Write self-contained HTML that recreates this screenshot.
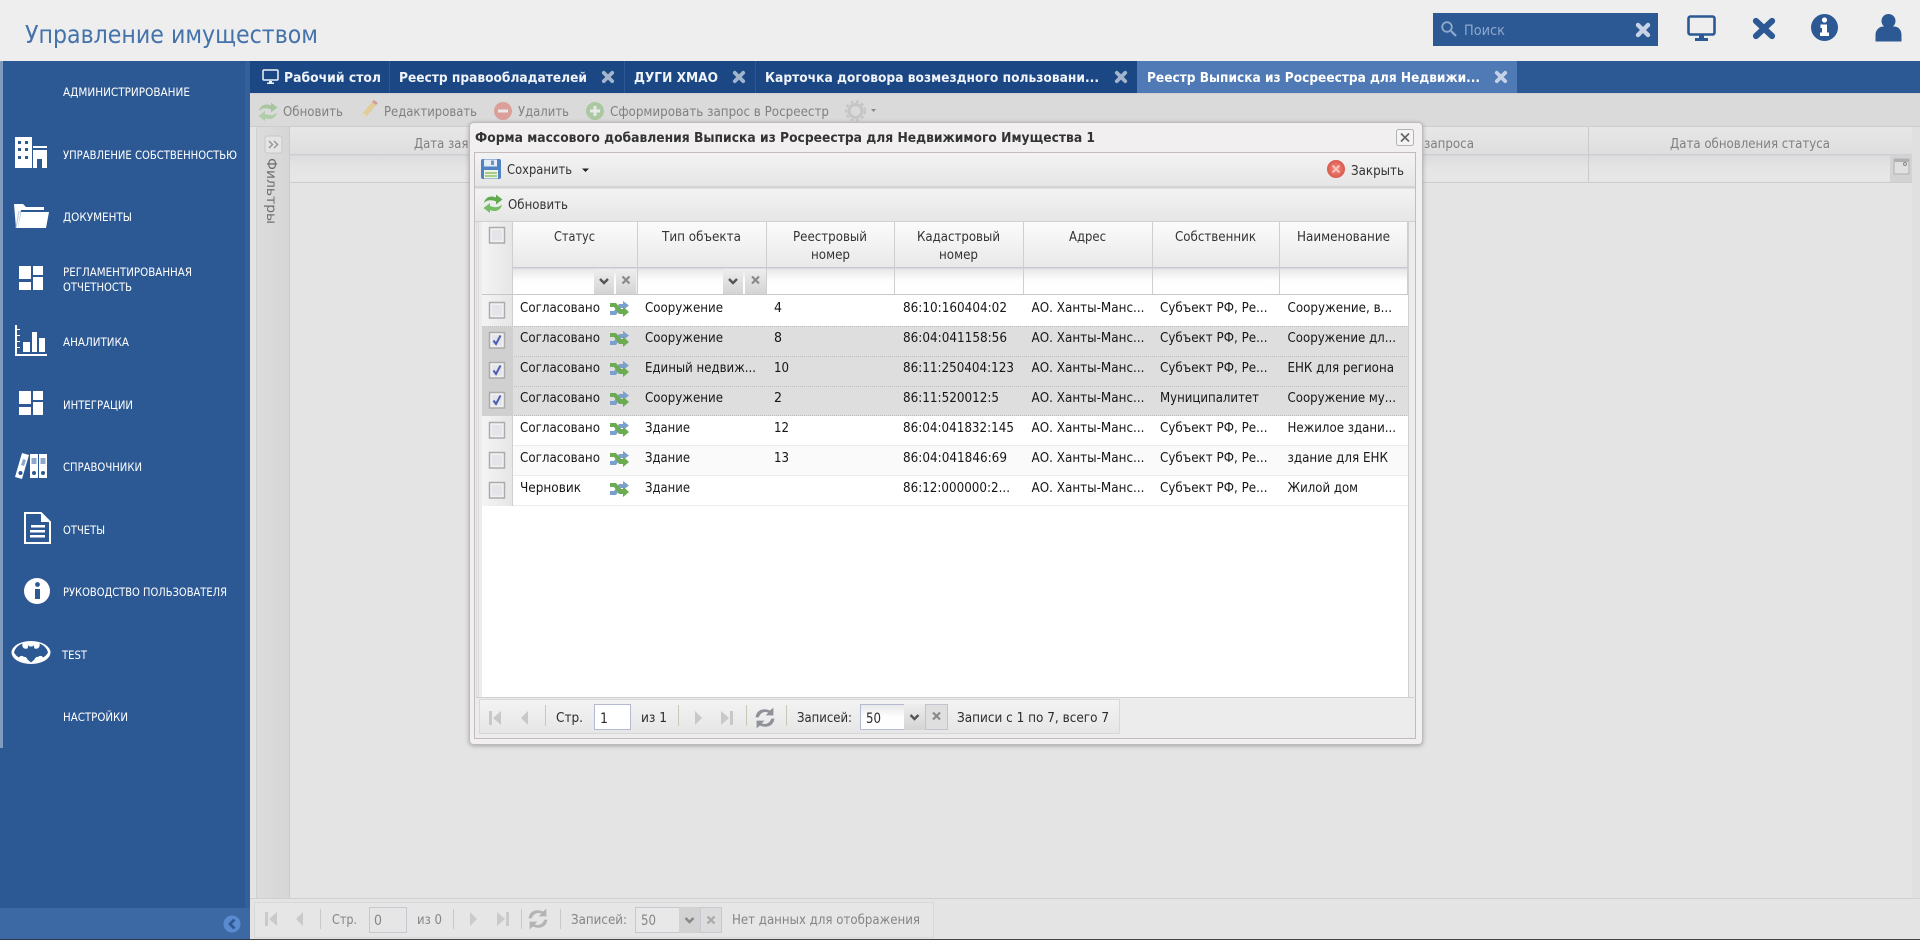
<!DOCTYPE html>
<html lang="ru"><head><meta charset="utf-8"><title>Управление имуществом</title>
<style>
html,body{margin:0;padding:0;width:1920px;height:940px;overflow:hidden;background:#e4e4e4}
svg{display:block}
text{font-family:"DejaVu Sans","Liberation Sans",sans-serif;font-size:13px;fill:#222}
.s text{font-size:11.500px;fill:#fff}
.tb text{font-size:13.500px;font-weight:bold;fill:#f0f4fa}
.d text{font-size:13.500px;fill:#808080}
.h text{font-size:13px;fill:#333}
.r text{font-size:13px;fill:#161616}
.p text{font-size:13px;fill:#2c2c2c}
.dp text{font-size:13px;fill:#858585}
</style></head><body>
<svg xmlns="http://www.w3.org/2000/svg" width="1920" height="940" viewBox="0 0 1920 940">
<defs>
<linearGradient id="gh" x1="0" y1="0" x2="0" y2="1"><stop offset="0" stop-color="#fbfbfb"/><stop offset="1" stop-color="#e9e9e9"/></linearGradient>
<linearGradient id="gf" x1="0" y1="0" x2="0" y2="1"><stop offset="0" stop-color="#e6e6e6"/><stop offset=".45" stop-color="#fdfdfd"/><stop offset="1" stop-color="#fff"/></linearGradient>
<linearGradient id="gt" x1="0" y1="0" x2="0" y2="1"><stop offset="0" stop-color="#f3f3f3"/><stop offset="1" stop-color="#e6e6e6"/></linearGradient>
<linearGradient id="gb" x1="0" y1="0" x2="0" y2="1"><stop offset="0" stop-color="#eeeeee"/><stop offset="1" stop-color="#d4d4d4"/></linearGradient>
<linearGradient id="gk" x1="0" y1="0" x2="1" y2="0"><stop offset="0" stop-color="#f4f4f4"/><stop offset="1" stop-color="#e6e6e6"/></linearGradient>
<linearGradient id="gd" x1="0" y1="0" x2="0" y2="1"><stop offset="0" stop-color="#e7e7e7"/><stop offset="1" stop-color="#dedede"/></linearGradient>
<linearGradient id="gdf" x1="0" y1="0" x2="0" y2="1"><stop offset="0" stop-color="#dcdcdc"/><stop offset=".5" stop-color="#e5e5e5"/><stop offset="1" stop-color="#e6e6e6"/></linearGradient>
<linearGradient id="gfl" x1="0" y1="0" x2="1" y2="0"><stop offset="0" stop-color="#dcdcdc"/><stop offset="1" stop-color="#d6d6d6"/></linearGradient>
<radialGradient id="gred"><stop offset="0" stop-color="#f08a80"/><stop offset="1" stop-color="#dc5a4e"/></radialGradient>

<g id="xi"><path d="M-5-5L5 5M5-5L-5 5" fill="none" stroke-width="4.400" stroke-linecap="round"/></g>
<g id="xt"><path d="M-4.200-4.200L4.200 4.200M4.200-4.200L-4.200 4.200" fill="none" stroke-width="3.800" stroke-linecap="round"/></g>
<g id="grid"><path d="M0 0h12v13H0zM14 0h10v9H14zM0 16h12v8H0zM14 11h10v13H14z" fill="#fff"/></g>
<g id="ref">
<path d="M1 9C2 3 8 1 13 3.500V0.500L19.500 5.500 13 10.500V7.500C8 5.500 4 6 1 9Z" fill="#62ab50"/>
<path d="M19 10.500C18 16.500 12 18.500 7 16V19L.5 14 7 9V12C12 14 16 13.500 19 10.500Z" fill="#76bc62"/>
</g>
<g id="shuf">
<path d="M0 10h4L9 3h4V0l6 4.500L13 9V7h-2L6 14H0z" fill="#7ba0cc"/>
<path d="M0 2h6l5 6h2V5.500L19 11l-6 5v-3H9L4 6H0z" fill="#6cab52"/>
</g>
<g id="cb"><rect x=".5" y=".5" width="15" height="15.500" fill="#f1f1f1" stroke="#ababab" stroke-width="1.500"/><rect x="3" y="3" width="10" height="10.500" fill="#e4e4ea"/></g>
<g id="cbc"><use href="#cb"/><path d="M4.500 8.500l2.500 3.500 4.500-8.500" fill="none" stroke="#4a5fae" stroke-width="2"/></g>
<g id="first"><rect x="0" y="-7" width="3" height="14" fill="currentColor"/><path d="M12-7V7L4 0z" fill="currentColor"/></g>
<g id="prev"><path d="M6-7V7L-1 0z" fill="currentColor"/></g>
<g id="next"><path d="M0-7V7L7 0z" fill="currentColor"/></g>
<g id="last"><rect x="9" y="-7" width="3" height="14" fill="currentColor"/><path d="M0-7V7L8 0z" fill="currentColor"/></g>
<g id="prf"><path d="M-9-1C-8-8-1-10 5-7L8-9.500V-3H1.500L4-5.500C0-7.500-5-6-6.500-1zM9 1C8 8 1 10-5 7L-8 9.500V3H-1.500L-4 5.500C0 7.500 5 6 6.500 1z" fill="currentColor" stroke="currentColor" stroke-width=".8"/></g>
<g id="dn"><path d="M-4-2L0 2 4-2" fill="none" stroke="#555" stroke-width="2.400"/></g>
<g id="xs"><path d="M-3.500-3.500L3.500 3.500M3.500-3.500L-3.500 3.500" fill="none" stroke="#8a8a8a" stroke-width="2.200"/></g>
</defs>

<!-- page bg -->
<rect width="1920" height="940" fill="#e4e4e4"/>

<!-- top header -->
<rect width="1920" height="61" fill="#eeeeee"/>
<text x="25" y="43" textLength="293" lengthAdjust="spacingAndGlyphs" style="font-size:25px;fill:#4472ab">Управление имуществом</text>
<rect x="1433" y="13" width="225" height="33" fill="#2c5994"/>
<circle cx="1447" cy="27" r="4.800" fill="none" stroke="#8ea8cc" stroke-width="1.800"/><path d="M1451 31l5 5" stroke="#8ea8cc" stroke-width="2.200"/>
<text x="1464" y="35" textLength="41" lengthAdjust="spacingAndGlyphs" style="font-size:14.500px;fill:#8ea8cc">Поиск</text>
<use href="#xi" x="1643" y="30" stroke="#c8d4e6"/>
<!-- monitor -->
<rect x="1688.500" y="16.500" width="26" height="18" rx="2" fill="none" stroke="#2c5994" stroke-width="2.600"/>
<path d="M1699 35h5v3h4v3h-13v-3h4z" fill="#2c5994"/>
<!-- x -->
<path d="M1756 21l16 15M1772 21l-16 15" fill="none" stroke="#2c5994" stroke-width="6.200" stroke-linecap="round"/>
<!-- info -->
<circle cx="1824.500" cy="27.500" r="13.500" fill="#2c5994"/>
<circle cx="1824.500" cy="20" r="2.600" fill="#fff"/><path d="M1820.500 24.500h6.500v8h2v3.500h-9v-3.500h2v-4.500h-1.500z" fill="#fff"/>
<!-- person -->
<circle cx="1888.500" cy="21" r="7" fill="#2c5994"/><path d="M1876 41v-6c0-6 5-8 7-8h11c3 0 7 2 7 8v6z" fill="#2c5994" stroke="#2c5994" stroke-linejoin="round"/>

<!-- sidebar -->
<rect x="0" y="61" width="250" height="879" fill="#2c5994"/>
<rect x="0" y="61" width="3" height="687" fill="#7f9bc0"/>
<rect x="245" y="61" width="5" height="847" fill="#33609b"/>
<rect x="0" y="908" width="250" height="32" fill="#3c68a4"/>
<circle cx="232" cy="924" r="8.500" fill="#5a8ad0"/><path d="M234.500 919.500L230 924l4.500 4.500" fill="none" stroke="#2c5994" stroke-width="2.800"/>
<g class="s">
<text x="63" y="96" textLength="127" lengthAdjust="spacingAndGlyphs">АДМИНИСТРИРОВАНИЕ</text>
<text x="63" y="159" textLength="174" lengthAdjust="spacingAndGlyphs">УПРАВЛЕНИЕ СОБСТВЕННОСТЬЮ</text>
<text x="63" y="221" textLength="69" lengthAdjust="spacingAndGlyphs">ДОКУМЕНТЫ</text>
<text x="63" y="276" textLength="129" lengthAdjust="spacingAndGlyphs">РЕГЛАМЕНТИРОВАННАЯ</text>
<text x="63" y="291" textLength="69" lengthAdjust="spacingAndGlyphs">ОТЧЕТНОСТЬ</text>
<text x="63" y="346" textLength="66" lengthAdjust="spacingAndGlyphs">АНАЛИТИКА</text>
<text x="63" y="409" textLength="70" lengthAdjust="spacingAndGlyphs">ИНТЕГРАЦИИ</text>
<text x="63" y="471" textLength="79" lengthAdjust="spacingAndGlyphs">СПРАВОЧНИКИ</text>
<text x="63" y="534" textLength="42" lengthAdjust="spacingAndGlyphs">ОТЧЕТЫ</text>
<text x="63" y="596" textLength="164" lengthAdjust="spacingAndGlyphs">РУКОВОДСТВО ПОЛЬЗОВАТЕЛЯ</text>
<text x="62" y="659" textLength="25" lengthAdjust="spacingAndGlyphs">TEST</text>
<text x="63" y="721" textLength="65" lengthAdjust="spacingAndGlyphs">НАСТРОЙКИ</text>
</g>
<!-- building -->
<path d="M15 137h17v31H15z" fill="#fff"/>
<path d="M18 141h3v3h-3zM25 141h3v3h-3zM18 148h3v3h-3zM25 148h3v3h-3zM18 156h3v3h-3zM25 156h3v3h-3z" fill="#2c5994"/>
<rect x="33" y="146" width="14" height="2" fill="#fff"/>
<path d="M33 150h14v18h-5v-9h-5v9h-4z" fill="#fff"/>
<!-- folder -->
<path d="M14 204h9l3 3h18v3H21l-3 18h-2z" fill="#fff"/>
<path d="M21 212h28l-3 16H18z" fill="#fff"/>
<path d="M16 228l3-17" stroke="#b8c8de" stroke-width="1" fill="none"/>
<!-- regl -->
<use href="#grid" x="19" y="266"/>
<!-- analytics -->
<path d="M15 325h2v29h30v2H15z" fill="#fff"/>
<path d="M17 329h3v1h-3zM17 335h3v1h-3zM17 341h3v1h-3zM17 347h3v1h-3z" fill="#fff"/>
<path d="M23 342h7v10h-7zM32 332h5v20h-5zM39 338h6v14h-6z" fill="#fff"/>
<!-- integrations -->
<use href="#grid" x="19" y="391"/>
<!-- binders -->
<g fill="#fff">
<path d="M22 453l7 2-7 24-7-2z"/>
<rect x="30" y="454" width="8" height="24"/>
<rect x="39" y="454" width="8" height="24"/>
</g>
<path d="M31.500 458h5v6h-5zM40.500 458h5v6h-5zM23 459l3 1-2 6-3-1z" fill="#8ea8cc"/>
<circle cx="34" cy="473" r="2" fill="#2c5994"/><circle cx="43" cy="473" r="2" fill="#2c5994"/><circle cx="20.500" cy="473" r="2" fill="#2c5994"/>
<!-- report -->
<path d="M25 513h16l9 9v21H25z" fill="none" stroke="#fff" stroke-width="2"/>
<path d="M41 513v9h9z" fill="#fff"/>
<path d="M31 525h14v2.500H31zM30 530h15v2.500H30zM30 535h15v2.500H30z" fill="#fff"/>
<!-- info -->
<circle cx="37" cy="591" r="13" fill="#fff"/>
<circle cx="37.500" cy="584.500" r="2.400" fill="#2c5994"/><rect x="35" y="589" width="5" height="10" fill="#2c5994"/>
<!-- batman: white oval with blue bat -->
<ellipse cx="31" cy="652.500" rx="19.500" ry="11.500" fill="#fff"/>
<path d="M14 652.500C15 648 18.500 645 22.500 643.500C21.500 647 24 649.500 27.500 648.500L28.500 645 29.500 646.500H32.500L33.500 645 34.500 648.500C38 649.500 40.500 647 39.500 643.500C43.500 645 47 648 48 652.500C46.500 655 45 656.500 43 657.500C42 655.500 39.500 655.500 38 657C37 656.500 35 657.500 34.500 659.500L31 662.500 27.500 659.500C27 657.500 25 656.500 24 657C22.500 655.500 20 655.500 19 657.500C17 656.500 15.500 655 14 652.500Z" fill="#2c5994"/>

<!-- tab strip -->
<rect x="250" y="61" width="1670" height="32" fill="#2c5994"/>
<rect x="250" y="61" width="887" height="32" fill="#1b4884"/>
<rect x="1137" y="61" width="380" height="32" fill="#4f7ab5"/>
<path d="M389.500 61v32M624.500 61v32M755.500 61v32" stroke="#2c5994" stroke-width="1"/>
<rect x="263" y="70" width="15" height="10" rx="1" fill="none" stroke="#f0f4fa" stroke-width="1.500"/><path d="M269 81h3v1.500h2v1.500h-7v-1.500h2z" fill="#f0f4fa"/>
<g class="tb">
<text x="284" y="82" textLength="97" lengthAdjust="spacingAndGlyphs">Рабочий стол</text>
<text x="399" y="82" textLength="188" lengthAdjust="spacingAndGlyphs">Реестр правообладателей</text>
<text x="634" y="82" textLength="84" lengthAdjust="spacingAndGlyphs">ДУГИ ХМАО</text>
<text x="765" y="82" textLength="334" lengthAdjust="spacingAndGlyphs">Карточка договора возмездного пользовани...</text>
<text x="1147" y="82" textLength="333" lengthAdjust="spacingAndGlyphs" style="fill:#fff">Реестр Выписка из Росреестра для Недвижи...</text>
</g>
<use href="#xt" x="608" y="77" stroke="#a3b5cd"/>
<use href="#xt" x="739" y="77" stroke="#a3b5cd"/>
<use href="#xt" x="1121" y="77" stroke="#a3b5cd"/>
<use href="#xt" x="1501" y="77" stroke="#c4d2e6"/>

<!-- back toolbar -->
<rect x="250" y="93" width="1670" height="34" fill="#dadada"/>
<rect x="250" y="93" width="1670" height="1" fill="#d0d0d0"/>
<rect x="250" y="126" width="1670" height="1" fill="#cdcdcd"/>
<g opacity=".42">
<use href="#ref" x="258" y="102"/>
<path d="M362 118l1-5 9-11 4 3-9 11z" fill="#e9bf3a"/><path d="M372 102l2-2 4 3-2 2z" fill="#d04a3a"/><path d="M362 118l1-5 4 3z" fill="#f3dcb0"/>
<circle cx="503" cy="111" r="9" fill="#d9503f"/><rect x="498" y="109.500" width="10" height="3" fill="#fff"/>
<circle cx="595" cy="111" r="9" fill="#6cb455"/><path d="M593.500 106h3v3.500h3.500v3h-3.500v3.500h-3v-3.500H590v-3h3.500z" fill="#fff"/>
<circle cx="855.500" cy="111" r="6.500" fill="none" stroke="#aaa" stroke-width="3"/><circle cx="855.500" cy="111" r="9.500" fill="none" stroke="#aaa" stroke-width="2.200" stroke-dasharray="3 2.600"/>
</g>
<path d="M871 109h5l-2.500 3z" fill="#8a8a8a"/>
<g class="d">
<text x="283" y="116" textLength="60" lengthAdjust="spacingAndGlyphs">Обновить</text>
<text x="384" y="116" textLength="93" lengthAdjust="spacingAndGlyphs">Редактировать</text>
<text x="518" y="116" textLength="51" lengthAdjust="spacingAndGlyphs">Удалить</text>
<text x="610" y="116" textLength="219" lengthAdjust="spacingAndGlyphs">Сформировать запрос в Росреестр</text>
</g>

<!-- filter panel -->
<rect x="250" y="127" width="7" height="771" fill="#e3e3e3"/>
<rect x="256" y="127" width="1" height="771" fill="#d0d0d0"/>
<rect x="257" y="127" width="32" height="771" fill="url(#gfl)"/>
<rect x="289" y="127" width="1" height="771" fill="#cbcbcb"/>
<rect x="265" y="136" width="17" height="17" rx="2" fill="#e4e4e4" stroke="#c8c8c8"/>
<path d="M269 141l3.500 3.500-3.500 3.500M274 141l3.500 3.500-3.500 3.500" fill="none" stroke="#999" stroke-width="1.500"/>
<text transform="translate(267,158) rotate(90)" textLength="66" lengthAdjust="spacingAndGlyphs" style="font-size:13.500px;fill:#6f6f6f">Фильтры</text>

<!-- back grid -->
<rect x="290" y="127" width="1622" height="27" fill="url(#gd)"/>
<rect x="290" y="154" width="1622" height="1.500" fill="#cdced6"/>
<rect x="290" y="155.500" width="1622" height="26.500" fill="url(#gdf)"/>
<rect x="290" y="182" width="1630" height="1" fill="#cccccc"/>
<rect x="1588" y="127" width="1" height="55" fill="#cacaca"/>
<rect x="1912" y="127" width="8" height="771" fill="#e0e0e0"/>
<g class="d">
<text x="414" y="148" textLength="76" lengthAdjust="spacingAndGlyphs">Дата заявки</text>
<text x="1424" y="148" textLength="50" lengthAdjust="spacingAndGlyphs">запроса</text>
<text x="1670" y="148" textLength="160" lengthAdjust="spacingAndGlyphs">Дата обновления статуса</text>
</g>
<rect x="1890" y="155" width="22" height="27" fill="#d3d3d3"/>
<rect x="1894" y="159" width="15" height="15" fill="#e0e0e0" stroke="#b0b0b0"/><rect x="1894" y="159" width="15" height="3" fill="#b0b0b0"/><circle cx="1905" cy="164" r="1.500" fill="none" stroke="#888"/>

<!-- back pager -->
<rect x="250" y="898" width="1670" height="1" fill="#d0d0d0"/>
<rect x="254.500" y="902.500" width="679" height="35" fill="#e6e6e6" stroke="#d8d8d8"/>
<g color="#cacaca">
<use href="#first" x="265" y="919"/><use href="#prev" x="297" y="919"/><use href="#next" x="470" y="919"/><use href="#last" x="497" y="919"/>
</g>
<use href="#prf" x="538" y="919" color="#b4b4b4"/>
<path d="M320.500 909v20M453.500 909v20M521.500 909v20M560.500 909v20" stroke="#c9c9c9"/>
<rect x="369.500" y="907.500" width="37" height="25" fill="#e6e6e6" stroke="#c8c8d0"/>
<rect x="635.500" y="907.500" width="44" height="25" fill="#e8e8e8" stroke="#c8c8d0"/>
<rect x="679" y="907" width="21" height="26" fill="#d2d2d2"/><use href="#dn" x="689.500" y="920" opacity=".6"/>
<rect x="700.500" y="907.500" width="21" height="25" fill="#dcdcdc" stroke="#c8c8d0"/><use href="#xs" x="711" y="920" opacity=".6"/>
<g class="dp">
<text x="332" y="924" textLength="25" lengthAdjust="spacingAndGlyphs">Стр.</text>
<text x="374" y="925" textLength="8" lengthAdjust="spacingAndGlyphs" style="font-size:14px">0</text>
<text x="417" y="924" textLength="25" lengthAdjust="spacingAndGlyphs">из 0</text>
<text x="571" y="924" textLength="56" lengthAdjust="spacingAndGlyphs">Записей:</text>
<text x="641" y="925" textLength="15" lengthAdjust="spacingAndGlyphs" style="font-size:14px">50</text>
<text x="732" y="924" textLength="188" lengthAdjust="spacingAndGlyphs">Нет данных для отображения</text>
</g>
<rect x="250" y="939" width="1670" height="1" fill="#444"/>
<rect x="0" y="939" width="250" height="1" fill="#2a3a50"/>

<!-- dialog -->
<rect x="469.500" y="122.500" width="953" height="622" rx="4" fill="#f1efef" stroke="#bcbcbc" style="filter:drop-shadow(0 1px 2px rgba(0,0,0,.28))"/>
<text x="475" y="142" textLength="620" lengthAdjust="spacingAndGlyphs" style="font-size:13.500px;font-weight:bold;fill:#333">Форма массового добавления Выписка из Росреестра для Недвижимого Имущества 1</text>
<rect x="1396.500" y="129.500" width="17" height="16" rx="2" fill="#f4f4f4" stroke="#b4b4b4"/>
<path d="M1401 133.500l8 8M1409 133.500l-8 8" stroke="#666" stroke-width="1.600"/>
<rect x="474.500" y="152.500" width="941" height="586" fill="#ececec" stroke="#c4bcbc"/>
<rect x="475" y="153" width="940" height="33" fill="url(#gt)"/>
<rect x="475" y="186" width="940" height="2.500" fill="#d4d4d4"/>
<rect x="475" y="189" width="940" height="32" fill="url(#gt)"/>
<rect x="475" y="221" width="940" height="1" fill="#d0d0d0"/>
<!-- save -->
<rect x="481" y="159" width="20" height="20" rx="2" fill="#4f83c6"/>
<rect x="484" y="159.500" width="13" height="7" fill="#e4ecf6"/><rect x="491" y="160.500" width="3" height="4.500" fill="#6f95c4"/>
<rect x="484" y="170" width="14" height="8.500" fill="#eef3e2"/><path d="M485 173h12M485 176h12" stroke="#8fbf6a" stroke-width="1.400"/>
<text x="507" y="174" textLength="65" lengthAdjust="spacingAndGlyphs" style="font-size:13.500px;fill:#333">Сохранить</text>
<path d="M582 168.500h7l-3.500 3.500z" fill="#222"/>
<circle cx="1336" cy="169" r="9" fill="url(#gred)"/><path d="M1332.500 165.500l7 7M1339.500 165.500l-7 7" stroke="#f6c4bc" stroke-width="2"/>
<text x="1351" y="175" textLength="53" lengthAdjust="spacingAndGlyphs" style="font-size:13.500px;fill:#333">Закрыть</text>
<use href="#ref" x="483" y="194"/>
<text x="508" y="209" textLength="60" lengthAdjust="spacingAndGlyphs" style="font-size:13.500px;fill:#333">Обновить</text>

<!-- inner grid -->
<rect x="476" y="222" width="6" height="476" fill="#ececec"/>
<path d="M476.500 222v476M478.500 222v476" stroke="#dadada"/>
<rect x="482" y="222" width="926" height="475" fill="#fff"/>
<rect x="1408" y="222" width="7" height="476" fill="#ececec"/>
<path d="M1408.500 222v476" stroke="#cfcfcf"/>
<!-- header -->
<rect x="482" y="222" width="926" height="45" fill="url(#gh)"/>
<rect x="482" y="267" width="926" height="1.500" fill="#c6c9d4"/>
<rect x="482" y="268.500" width="926" height="25.500" fill="url(#gf)"/>
<rect x="482" y="294" width="926" height="1" fill="#c8c8c8"/>
<rect x="482" y="222" width="30.500" height="72" fill="url(#gk)"/>
<path d="M512.500 222v72M637.500 222v72M766.500 222v72M894.500 222v72M1023.500 222v72M1152.500 222v72M1279.500 222v72M1407.500 222v72" stroke="#cfcfcf"/>
<rect x="594" y="268.500" width="20" height="25.500" fill="url(#gb)"/><use href="#dn" x="604" y="281"/>
<rect x="616" y="268.500" width="20.500" height="25.500" fill="url(#gb)"/><use href="#xs" x="626" y="280"/>
<rect x="723" y="268.500" width="20" height="25.500" fill="url(#gb)"/><use href="#dn" x="733" y="281"/>
<rect x="745" y="268.500" width="21" height="25.500" fill="url(#gb)"/><use href="#xs" x="755.500" y="280"/>
<use href="#cb" x="489" y="227"/>
<g class="h">
<text x="554" y="241" textLength="41" lengthAdjust="spacingAndGlyphs">Статус</text>
<text x="662" y="241" textLength="79" lengthAdjust="spacingAndGlyphs">Тип объекта</text>
<text x="793" y="241" textLength="74" lengthAdjust="spacingAndGlyphs">Реестровый</text>
<text x="811" y="259" textLength="39" lengthAdjust="spacingAndGlyphs">номер</text>
<text x="917" y="241" textLength="83" lengthAdjust="spacingAndGlyphs">Кадастровый</text>
<text x="939" y="259" textLength="39" lengthAdjust="spacingAndGlyphs">номер</text>
<text x="1069" y="241" textLength="37" lengthAdjust="spacingAndGlyphs">Адрес</text>
<text x="1175" y="241" textLength="81" lengthAdjust="spacingAndGlyphs">Собственник</text>
<text x="1297" y="241" textLength="93" lengthAdjust="spacingAndGlyphs">Наименование</text>
</g>

<!-- rows -->
<rect x="482" y="326" width="926" height="90" fill="#dedede"/>
<rect x="482" y="446" width="926" height="30" fill="#fafafa"/>
<path d="M482 445.500h926M482 475.500h926M482 505.500h926" stroke="#ececec"/>
<path d="M482 326.500h926M482 356.500h926M482 386.500h926M482 415.500h926" stroke="#bdbdbd" stroke-dasharray="1 1"/>
<rect x="482" y="295" width="30" height="31" fill="url(#gk)"/>
<rect x="482" y="327" width="30" height="89" fill="#d0d0d0"/>
<rect x="482" y="416" width="30" height="90" fill="url(#gk)"/>
<path d="M512.500 295v211" stroke="#cfcfcf"/>
<use href="#cb" x="489" y="302"/><use href="#cbc" x="489" y="332"/><use href="#cbc" x="489" y="362"/><use href="#cbc" x="489" y="392"/><use href="#cb" x="489" y="422"/><use href="#cb" x="489" y="452"/><use href="#cb" x="489" y="482"/>
<use href="#shuf" x="610" y="301"/><use href="#shuf" x="610" y="331"/><use href="#shuf" x="610" y="361"/><use href="#shuf" x="610" y="391"/><use href="#shuf" x="610" y="421"/><use href="#shuf" x="610" y="451"/><use href="#shuf" x="610" y="481"/>
<g class="r">
<text x="520" y="312" textLength="80" lengthAdjust="spacingAndGlyphs">Согласовано</text>
<text x="645" y="312" textLength="78" lengthAdjust="spacingAndGlyphs">Сооружение</text>
<text x="774" y="312" textLength="8" lengthAdjust="spacingAndGlyphs">4</text>
<text x="903" y="312" textLength="104" lengthAdjust="spacingAndGlyphs">86:10:160404:02</text>
<text x="1031.500" y="312" textLength="113" lengthAdjust="spacingAndGlyphs">АО. Ханты-Манс...</text>
<text x="1160" y="312" textLength="107.500" lengthAdjust="spacingAndGlyphs">Субъект РФ, Ре...</text>
<text x="1287.500" y="312" textLength="104.500" lengthAdjust="spacingAndGlyphs">Сооружение, в...</text>

<text x="520" y="342" textLength="80" lengthAdjust="spacingAndGlyphs">Согласовано</text>
<text x="645" y="342" textLength="78" lengthAdjust="spacingAndGlyphs">Сооружение</text>
<text x="774" y="342" textLength="8" lengthAdjust="spacingAndGlyphs">8</text>
<text x="903" y="342" textLength="104" lengthAdjust="spacingAndGlyphs">86:04:041158:56</text>
<text x="1031.500" y="342" textLength="113" lengthAdjust="spacingAndGlyphs">АО. Ханты-Манс...</text>
<text x="1160" y="342" textLength="107.500" lengthAdjust="spacingAndGlyphs">Субъект РФ, Ре...</text>
<text x="1287.500" y="342" textLength="108.500" lengthAdjust="spacingAndGlyphs">Сооружение дл...</text>

<text x="520" y="372" textLength="80" lengthAdjust="spacingAndGlyphs">Согласовано</text>
<text x="645" y="372" textLength="111" lengthAdjust="spacingAndGlyphs">Единый недвиж...</text>
<text x="774" y="372" textLength="15" lengthAdjust="spacingAndGlyphs">10</text>
<text x="903" y="372" textLength="111" lengthAdjust="spacingAndGlyphs">86:11:250404:123</text>
<text x="1031.500" y="372" textLength="113" lengthAdjust="spacingAndGlyphs">АО. Ханты-Манс...</text>
<text x="1160" y="372" textLength="107.500" lengthAdjust="spacingAndGlyphs">Субъект РФ, Ре...</text>
<text x="1287.500" y="372" textLength="106.500" lengthAdjust="spacingAndGlyphs">ЕНК для региона</text>

<text x="520" y="402" textLength="80" lengthAdjust="spacingAndGlyphs">Согласовано</text>
<text x="645" y="402" textLength="78" lengthAdjust="spacingAndGlyphs">Сооружение</text>
<text x="774" y="402" textLength="8" lengthAdjust="spacingAndGlyphs">2</text>
<text x="903" y="402" textLength="96" lengthAdjust="spacingAndGlyphs">86:11:520012:5</text>
<text x="1031.500" y="402" textLength="113" lengthAdjust="spacingAndGlyphs">АО. Ханты-Манс...</text>
<text x="1160" y="402" textLength="99" lengthAdjust="spacingAndGlyphs">Муниципалитет</text>
<text x="1287.500" y="402" textLength="108.500" lengthAdjust="spacingAndGlyphs">Сооружение му...</text>

<text x="520" y="432" textLength="80" lengthAdjust="spacingAndGlyphs">Согласовано</text>
<text x="645" y="432" textLength="45" lengthAdjust="spacingAndGlyphs">Здание</text>
<text x="774" y="432" textLength="15" lengthAdjust="spacingAndGlyphs">12</text>
<text x="903" y="432" textLength="111" lengthAdjust="spacingAndGlyphs">86:04:041832:145</text>
<text x="1031.500" y="432" textLength="113" lengthAdjust="spacingAndGlyphs">АО. Ханты-Манс...</text>
<text x="1160" y="432" textLength="107.500" lengthAdjust="spacingAndGlyphs">Субъект РФ, Ре...</text>
<text x="1287.500" y="432" textLength="108.500" lengthAdjust="spacingAndGlyphs">Нежилое здани...</text>

<text x="520" y="462" textLength="80" lengthAdjust="spacingAndGlyphs">Согласовано</text>
<text x="645" y="462" textLength="45" lengthAdjust="spacingAndGlyphs">Здание</text>
<text x="774" y="462" textLength="15" lengthAdjust="spacingAndGlyphs">13</text>
<text x="903" y="462" textLength="104" lengthAdjust="spacingAndGlyphs">86:04:041846:69</text>
<text x="1031.500" y="462" textLength="113" lengthAdjust="spacingAndGlyphs">АО. Ханты-Манс...</text>
<text x="1160" y="462" textLength="107.500" lengthAdjust="spacingAndGlyphs">Субъект РФ, Ре...</text>
<text x="1287.500" y="462" textLength="100.500" lengthAdjust="spacingAndGlyphs">здание для ЕНК</text>

<text x="520" y="492" textLength="61" lengthAdjust="spacingAndGlyphs">Черновик</text>
<text x="645" y="492" textLength="45" lengthAdjust="spacingAndGlyphs">Здание</text>
<text x="903" y="492" textLength="107" lengthAdjust="spacingAndGlyphs">86:12:000000:2...</text>
<text x="1031.500" y="492" textLength="113" lengthAdjust="spacingAndGlyphs">АО. Ханты-Манс...</text>
<text x="1160" y="492" textLength="107.500" lengthAdjust="spacingAndGlyphs">Субъект РФ, Ре...</text>
<text x="1287.500" y="492" textLength="70.500" lengthAdjust="spacingAndGlyphs">Жилой дом</text>
</g>

<!-- dialog pager -->
<rect x="476" y="697" width="938" height="1" fill="#cfcfcf"/>
<rect x="479.500" y="699.500" width="640" height="34" fill="url(#gt)" stroke="#d8d8d8"/>
<g color="#c8c8c8">
<use href="#first" x="489" y="718"/><use href="#prev" x="522" y="718"/><use href="#next" x="695" y="718"/><use href="#last" x="721" y="718"/>
</g>
<use href="#prf" x="765" y="718" color="#8e9298"/>
<path d="M545.500 705v21M678.500 705v21M746.500 705v21M786.500 705v21" stroke="#c9c9b8"/>
<rect x="594.500" y="704.500" width="36" height="25" fill="#fff" stroke="#b6bad0"/>
<rect x="860.500" y="704.500" width="44" height="25" fill="url(#gf)" stroke="#b6bad0"/>
<rect x="904" y="704" width="21" height="26" fill="url(#gb)"/><use href="#dn" x="914.500" y="717"/>
<rect x="925.500" y="704.500" width="22" height="25" fill="#dfdfdf" stroke="#c0c4d0"/><use href="#xs" x="936.500" y="716"/>
<g class="p">
<text x="556" y="722" textLength="27" lengthAdjust="spacingAndGlyphs">Стр.</text>
<text x="600" y="723" textLength="8" lengthAdjust="spacingAndGlyphs" style="font-size:14.500px">1</text>
<text x="641" y="722" textLength="26" lengthAdjust="spacingAndGlyphs">из 1</text>
<text x="797" y="722" textLength="55" lengthAdjust="spacingAndGlyphs">Записей:</text>
<text x="866" y="723" textLength="15" lengthAdjust="spacingAndGlyphs" style="font-size:14.500px">50</text>
<text x="957" y="722" textLength="152" lengthAdjust="spacingAndGlyphs">Записи с 1 по 7, всего 7</text>
</g>
</svg>
</body></html>
